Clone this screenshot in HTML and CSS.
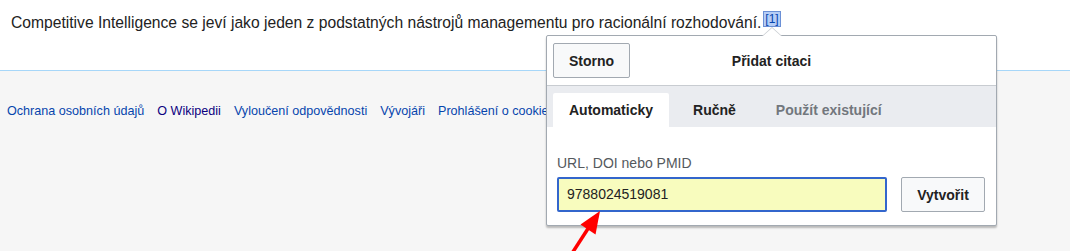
FILE: index.html
```html
<!DOCTYPE html>
<html lang="cs">
<head>
<meta charset="utf-8">
<title>Přidat citaci</title>
<link rel="stylesheet" href="styles.css">
</head>
<body>
<div class="page">
  <div class="content">
    <p class="para">Competitive Intelligence se jeví jako jeden z podstatných nástrojů managementu pro racionální rozhodování.<sup class="ref">[1]</sup></p>
  </div>
  <div class="footer">
    <ul class="links">
      <li><a href="#">Ochrana osobních údajů</a></li>
      <li><a href="#" class="visited">O Wikipedii</a></li>
      <li><a href="#">Vyloučení odpovědnosti</a></li>
      <li><a href="#">Vývojáři</a></li>
      <li><a href="#">Prohlášení o cookies</a></li>
    </ul>
  </div>

  <div class="popup">
    <div class="pointer"></div>
    <div class="head">
      <div class="head-left"><button class="btn">Storno</button></div>
      <div class="title">Přidat citaci</div>
      <div class="head-right"></div>
    </div>
    <div class="tabs">
      <div class="tab active">Automaticky</div>
      <div class="tab">Ručně</div>
      <div class="tab disabled">Použít existující</div>
    </div>
    <div class="body">
      <div class="label">URL, DOI nebo PMID</div>
      <div class="row">
        <div class="input">9788024519081</div>
        <button class="btn">Vytvořit</button>
      </div>
    </div>
  </div>

  <svg class="arrow" width="1070" height="251" viewBox="0 0 1070 251">
    <line x1="569" y1="258" x2="591" y2="224" stroke="#ff0000" stroke-width="3.5"/>
    <polygon points="600,211 595.5,234.4 580.5,224.6" fill="#ff0000"/>
  </svg>
</div>
</body>
</html>
```

FILE: styles.css
```css
* { box-sizing: border-box; }
html, body { margin: 0; padding: 0; }
body {
  font-family: "Liberation Sans", Arial, sans-serif;
  color: #222;
  background: #f6f6f6;
  width: 1070px;
  height: 251px;
  overflow: hidden;
}
.page {
  position: relative;
  width: 1070px;
  height: 251px;
}
.content {
  background: #fff;
  height: 71px;
  border-bottom: 1px solid #a7d7f9;
}
.para {
  margin: 0;
  padding: 12px 0 0 11px;
  font-size: 15.65px;
  line-height: 22px;
  color: #222;
}
.ref {
  font-size: 12px;
  line-height: 1;
  color: #0645ad;
  background: #b5cdf6;
  outline: 1px solid #6b90d6;
  padding: 0 1px;
  margin-left: 3px;
  vertical-align: 5px;
}
.footer {
  padding: 32px 0 0 7px;
}
.links {
  list-style: none;
  margin: 0;
  padding: 0;
  display: flex;
  gap: 13px;
  font-size: 12.6px;
  line-height: 16px;
}
.links a {
  color: #0645ad;
  text-decoration: none;
  white-space: nowrap;
}
.links a.visited { color: #0b0080; }

.popup {
  position: absolute;
  left: 546px;
  top: 35px;
  width: 451px;
  height: 191px;
  background: #fff;
  border: 1px solid #a2a9b1;
  border-radius: 2px;
  box-shadow: 0 2px 2px 0 rgba(0,0,0,0.25);
}
.pointer {
  position: absolute;
  left: 215px;
  top: -9px;
  width: 0;
  height: 0;
  border-left: 10px solid transparent;
  border-right: 10px solid transparent;
  border-bottom: 9px solid #c8ccd1;
}
.pointer::after {
  content: "";
  position: absolute;
  left: -9px;
  top: 1px;
  border-left: 9px solid transparent;
  border-right: 9px solid transparent;
  border-bottom: 8px solid #fff;
}
.head {
  height: 50px;
  border-bottom: 1px solid #c8ccd1;
  display: grid;
  grid-template-columns: 1fr auto 1fr;
  align-items: start;
}
.head-left { padding: 7px 0 0 6px; }
.title {
  font-weight: bold;
  font-size: 14px;
  line-height: 20px;
  padding-top: 15px;
}
.btn {
  font-family: "Liberation Sans", Arial, sans-serif;
  font-weight: bold;
  font-size: 14px;
  color: #222;
  background: #f8f9fa;
  border: 1px solid #a2a9b1;
  border-radius: 2px;
  height: 35px;
  padding: 0 15px;
  margin: 0;
}
.tabs {
  background: #eaecf0;
  height: 41px;
  padding: 7px 0 0 6px;
  display: flex;
  gap: 8px;
}
.tab {
  height: 34px;
  padding: 0 16px;
  font-weight: bold;
  font-size: 14px;
  line-height: 34px;
  color: #222;
  border-radius: 2px 2px 0 0;
}
.tab.active { background: #fff; }
.tab.disabled { color: #72777d; }
.body {
  padding: 26px 11px 0 10px;
}
.label {
  font-size: 14px;
  line-height: 20px;
  color: #54595d;
}
.row {
  margin-top: 4px;
  display: flex;
  align-items: center;
  gap: 14px;
}
.input {
  width: 330px;
  height: 35px;
  background: #f8fcbe;
  border: 2px solid #3366cc;
  border-radius: 2px;
  padding: 0 8px;
  font-size: 14px;
  line-height: 31px;
  color: #222;
}
.row .btn {
  width: 84px;
  padding: 0;
  margin-left: auto;
}
.arrow {
  position: absolute;
  left: 0;
  top: 0;
  pointer-events: none;
}
```
